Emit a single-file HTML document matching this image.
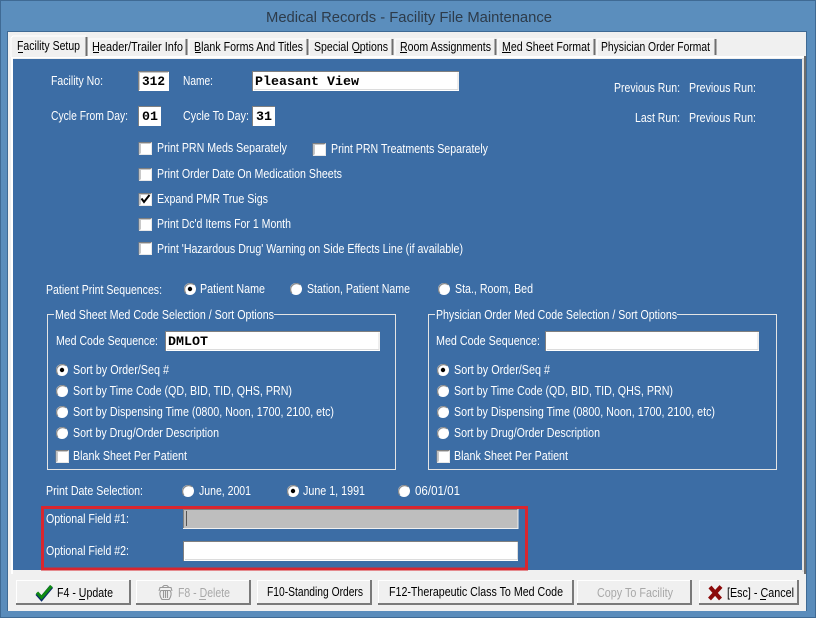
<!DOCTYPE html>
<html><head><meta charset="utf-8"><style>
html,body{margin:0;padding:0;background:#fff;width:816px;height:621px;overflow:hidden}
svg{display:block}
text{font-family:"Liberation Sans",sans-serif;font-size:13px;fill:#fff}
.k text,text.k{fill:#000}
.d text{fill:#a8a8a8}
.m{font-family:"Liberation Mono",monospace;font-weight:bold;font-size:13px;fill:#000}
</style></head><body>
<svg width="816" height="621" viewBox="0 0 816 621" xmlns="http://www.w3.org/2000/svg" shape-rendering="crispEdges">
<defs>
<linearGradient id="t" x1="0" y1="0" x2="0" y2="1"><stop offset="0" stop-color="#5b8ebd"/><stop offset="1" stop-color="#5a8cbb"/></linearGradient>
<g id="cb"><rect x="0" y="0" width="13" height="13" fill="#fff"/><path d="M0 12.500V.5H12.500" fill="none" stroke="#808080"/><path d="M1.500 11.500V1.500H11.500" fill="none" stroke="#c8c8c8"/><path d="M1 12.500H12.500V1" fill="none" stroke="#e8e8e8"/></g>
<g id="ro" shape-rendering="auto"><circle r="6" fill="#fff"/><path d="M-4.200 4.200A6 6 0 0 1 4.200-4.200" fill="none" stroke="#8a8a8a" stroke-width="1.200"/></g>
<g id="rc" shape-rendering="auto"><use href="#ro"/><circle r="2.200" fill="#000"/></g>
</defs>
<rect x="0" y="0" width="816" height="618" fill="url(#t)"/>
<rect x=".5" y=".5" width="815" height="617" fill="none" stroke="#3f6a94"/>
<text x="266" y="22" textLength="286" lengthAdjust="spacingAndGlyphs" style="font-size:15px;fill:#2d3b4a">Medical Records - Facility File Maintenance</text>
<rect x="8" y="32" width="798" height="579" fill="#f0f0f0"/>
<path d="M7.500 611V31.500H806.500V611" fill="none" stroke="#3f6a94"/>
<!-- page -->
<rect x="11" y="56" width="794" height="518" fill="#f0f0f0"/>
<rect x="11" y="56" width="793" height="2" fill="#fff"/>
<rect x="11" y="56" width="2" height="518" fill="#fff"/>
<rect x="804" y="56" width="2" height="518" fill="#6e6e6e"/>
<rect x="802" y="58" width="2" height="514" fill="#e4e4e4"/>
<rect x="13" y="59" width="789" height="511" fill="#3c6da5"/>
<!-- tabs -->
<g>
<path d="M11 57V38L13 36H86V57Z" fill="#f0f0f0"/><path d="M11 57V38L13 36H86" fill="none" stroke="#fff"/><path d="M86.500 37V56" stroke="#6e6e6e" stroke-width="2"/>
<path d="M89 56V39H185" fill="none" stroke="#fff"/><path d="M186.500 39V55" stroke="#6e6e6e" stroke-width="2"/>
<path d="M189 56V39H306" fill="none" stroke="#fff"/><path d="M307.500 39V55" stroke="#6e6e6e" stroke-width="2"/>
<path d="M309 56V39H391" fill="none" stroke="#fff"/><path d="M392.500 39V55" stroke="#6e6e6e" stroke-width="2"/>
<path d="M395 56V39H494" fill="none" stroke="#fff"/><path d="M495.500 39V55" stroke="#6e6e6e" stroke-width="2"/>
<path d="M498 56V39H593" fill="none" stroke="#fff"/><path d="M594.500 39V55" stroke="#6e6e6e" stroke-width="2"/>
<path d="M597 56V39H714" fill="none" stroke="#fff"/><path d="M715.500 39V55" stroke="#6e6e6e" stroke-width="2"/>
</g>
<g class="k">
<text x="17" y="50" textLength="63" lengthAdjust="spacingAndGlyphs">Facility Setup</text>
<text x="92" y="51" textLength="91" lengthAdjust="spacingAndGlyphs">Header/Trailer Info</text>
<text x="194" y="51" textLength="109" lengthAdjust="spacingAndGlyphs">Blank Forms And Titles</text>
<text x="314" y="51" textLength="74" lengthAdjust="spacingAndGlyphs">Special Options</text>
<text x="400" y="51" textLength="91" lengthAdjust="spacingAndGlyphs">Room Assignments</text>
<text x="502" y="51" textLength="88" lengthAdjust="spacingAndGlyphs">Med Sheet Format</text>
<text x="601" y="51" textLength="109" lengthAdjust="spacingAndGlyphs">Physician Order Format</text>
</g>
<path d="M18 52.500H23M93 52.500H99M195 52.500H201M354 52.500H361M400 52.500H407M502 52.500H511" stroke="#000"/>
<!-- top fields -->
<g>
<rect x="138" y="71" width="31" height="20" fill="#fff"/><path d="M138.500 91V71.500H169" fill="none" stroke="#808080"/><path d="M139.500 90V72.500H168" fill="none" stroke="#c8c8c8"/>
<rect x="252" y="71" width="207" height="20" fill="#fff"/><path d="M252.500 91V71.500H459" fill="none" stroke="#808080"/><path d="M458 72.500V89.500H254" fill="none" stroke="#dcdcdc"/>
<rect x="138" y="106" width="23" height="20" fill="#fff"/><path d="M138.500 126V106.500H161" fill="none" stroke="#808080"/>
<rect x="252" y="106" width="23" height="20" fill="#fff"/><path d="M252.500 126V106.500H275" fill="none" stroke="#808080"/>
</g>
<text x="142" y="85" textLength="23" class="m" lengthAdjust="spacingAndGlyphs">312</text>
<text x="255" y="85" textLength="104" class="m" lengthAdjust="spacingAndGlyphs">Pleasant View</text>
<text x="142" y="120" textLength="16" class="m" lengthAdjust="spacingAndGlyphs">01</text>
<text x="256" y="120" textLength="16" class="m" lengthAdjust="spacingAndGlyphs">31</text>
<text x="51" y="85" textLength="52" lengthAdjust="spacingAndGlyphs">Facility No:</text>
<text x="183" y="85" textLength="30" lengthAdjust="spacingAndGlyphs">Name:</text>
<text x="51" y="120" textLength="77" lengthAdjust="spacingAndGlyphs">Cycle From Day:</text>
<text x="183" y="120" textLength="66" lengthAdjust="spacingAndGlyphs">Cycle To Day:</text>
<text x="614" y="92" textLength="66" lengthAdjust="spacingAndGlyphs">Previous Run:</text>
<text x="689" y="92" textLength="67" lengthAdjust="spacingAndGlyphs">Previous Run:</text>
<text x="635" y="122" textLength="45" lengthAdjust="spacingAndGlyphs">Last Run:</text>
<text x="689" y="122" textLength="67" lengthAdjust="spacingAndGlyphs">Previous Run:</text>
<!-- checkboxes -->
<use href="#cb" x="139" y="142"/><use href="#cb" x="313" y="143"/><use href="#cb" x="139" y="168"/><use href="#cb" x="139" y="193"/><use href="#cb" x="139" y="218"/><use href="#cb" x="139" y="242"/>
<path d="M141.500 198.500L144 202L149.500 195" fill="none" stroke="#000" stroke-width="2" shape-rendering="auto"/>
<text x="157" y="152" textLength="130" lengthAdjust="spacingAndGlyphs">Print PRN Meds Separately</text>
<text x="331" y="153" textLength="157" lengthAdjust="spacingAndGlyphs">Print PRN Treatments Separately</text>
<text x="157" y="178" textLength="185" lengthAdjust="spacingAndGlyphs">Print Order Date On Medication Sheets</text>
<text x="157" y="203" textLength="111" lengthAdjust="spacingAndGlyphs">Expand PMR True Sigs</text>
<text x="157" y="228" textLength="134" lengthAdjust="spacingAndGlyphs">Print Dc'd Items For 1 Month</text>
<text x="157" y="253" textLength="306" lengthAdjust="spacingAndGlyphs">Print 'Hazardous Drug' Warning on Side Effects Line (if available)</text>
<!-- sequences -->
<text x="46" y="294" textLength="116" lengthAdjust="spacingAndGlyphs">Patient Print Sequences:</text>
<use href="#rc" x="190" y="289"/><use href="#ro" x="296" y="289"/><use href="#ro" x="444" y="289"/>
<text x="200" y="293" textLength="65" lengthAdjust="spacingAndGlyphs">Patient Name</text>
<text x="307" y="293" textLength="103" lengthAdjust="spacingAndGlyphs">Station, Patient Name</text>
<text x="455" y="293" textLength="78" lengthAdjust="spacingAndGlyphs">Sta., Room, Bed</text>
<!-- group 1 -->
<path d="M54 314.500H47.500V469.500H395.500V314.500H274" fill="none" stroke="#e4e4e4"/>
<text x="55" y="319" textLength="219" lengthAdjust="spacingAndGlyphs">Med Sheet Med Code Selection / Sort Options</text>
<text x="56" y="345" textLength="102" lengthAdjust="spacingAndGlyphs">Med Code Sequence:</text>
<rect x="165" y="331" width="215" height="20" fill="#fff"/><path d="M165.500 351V331.500H380" fill="none" stroke="#808080"/><path d="M379 332.500V349.500H167" fill="none" stroke="#dcdcdc"/>
<text x="168" y="345" textLength="40" class="m" lengthAdjust="spacingAndGlyphs">DMLOT</text>
<use href="#rc" x="62" y="370"/><use href="#ro" x="62" y="391"/><use href="#ro" x="62" y="412"/><use href="#ro" x="62" y="433"/>
<text x="73" y="374" textLength="96" lengthAdjust="spacingAndGlyphs">Sort by Order/Seq #</text>
<text x="73" y="395" textLength="219" lengthAdjust="spacingAndGlyphs">Sort by Time Code (QD, BID, TID, QHS, PRN)</text>
<text x="73" y="416" textLength="261" lengthAdjust="spacingAndGlyphs">Sort by Dispensing Time (0800, Noon, 1700, 2100, etc)</text>
<text x="73" y="437" textLength="146" lengthAdjust="spacingAndGlyphs">Sort by Drug/Order Description</text>
<use href="#cb" x="56" y="450"/>
<text x="73" y="460" textLength="114" lengthAdjust="spacingAndGlyphs">Blank Sheet Per Patient</text>
<!-- group 2 -->
<path d="M435 314.500H428.500V469.500H776.500V314.500H677" fill="none" stroke="#e4e4e4"/>
<text x="436" y="319" textLength="241" lengthAdjust="spacingAndGlyphs">Physician Order Med Code Selection / Sort Options</text>
<text x="436" y="345" textLength="104" lengthAdjust="spacingAndGlyphs">Med Code Sequence:</text>
<rect x="545" y="331" width="214" height="20" fill="#fff"/><path d="M545.500 351V331.500H759" fill="none" stroke="#808080"/><path d="M758 332.500V349.500H547" fill="none" stroke="#dcdcdc"/>
<use href="#rc" x="443" y="370"/><use href="#ro" x="443" y="391"/><use href="#ro" x="443" y="412"/><use href="#ro" x="443" y="433"/>
<text x="454" y="374" textLength="96" lengthAdjust="spacingAndGlyphs">Sort by Order/Seq #</text>
<text x="454" y="395" textLength="219" lengthAdjust="spacingAndGlyphs">Sort by Time Code (QD, BID, TID, QHS, PRN)</text>
<text x="454" y="416" textLength="261" lengthAdjust="spacingAndGlyphs">Sort by Dispensing Time (0800, Noon, 1700, 2100, etc)</text>
<text x="454" y="437" textLength="146" lengthAdjust="spacingAndGlyphs">Sort by Drug/Order Description</text>
<use href="#cb" x="437" y="450"/>
<text x="454" y="460" textLength="114" lengthAdjust="spacingAndGlyphs">Blank Sheet Per Patient</text>
<!-- date -->
<text x="46" y="495" textLength="97" lengthAdjust="spacingAndGlyphs">Print Date Selection:</text>
<use href="#ro" x="188" y="491"/><use href="#rc" x="293" y="491"/><use href="#ro" x="404" y="491"/>
<text x="199" y="495" textLength="52" lengthAdjust="spacingAndGlyphs">June, 2001</text>
<text x="303" y="495" textLength="62" lengthAdjust="spacingAndGlyphs">June 1, 1991</text>
<text x="415" y="495" textLength="45" lengthAdjust="spacingAndGlyphs">06/01/01</text>
<!-- optional -->
<text x="46" y="523" textLength="83" lengthAdjust="spacingAndGlyphs">Optional Field #1:</text>
<text x="46" y="555" textLength="83" lengthAdjust="spacingAndGlyphs">Optional Field #2:</text>
<rect x="183" y="509" width="335" height="20" fill="#bebebe"/><path d="M183.500 529V509.500H518" fill="none" stroke="#808080"/><path d="M518 509V528.500H183" fill="none" stroke="#f0f0f0"/><path d="M186.500 511V526" stroke="#555"/>
<rect x="183" y="541" width="335" height="20" fill="#fff"/><path d="M183.500 561V541.500H518" fill="none" stroke="#808080"/><path d="M517.500 542V559.500H185" fill="none" stroke="#dcdcdc"/>
<rect x="42.500" y="507.500" width="484" height="61.500" fill="none" stroke="#d9262e" stroke-width="3"/>
<!-- buttons -->
<g fill="#f0f0f0">
<rect x="16" y="580" width="115" height="25"/><rect x="136" y="580" width="115" height="25"/><rect x="257" y="580" width="115" height="25"/><rect x="378" y="580" width="196" height="25"/><rect x="577" y="580" width="115" height="25"/><rect x="699" y="580" width="100" height="25"/>
</g>
<g fill="none" stroke="#fff">
<path d="M16.500 604V580.500H130M136.500 604V580.500H250M257.500 604V580.500H371M378.500 604V580.500H573M577.500 604V580.500H691M699.500 604V580.500H798"/>
</g>
<g fill="none" stroke="#7a7a7a" stroke-width="2">
<path d="M130 580V604H16M250 580V604H136M371 580V604H257M573 580V604H378M691 580V604H577M798 580V604H699"/>
</g>
<g class="k">
<text x="57" y="597" textLength="56" lengthAdjust="spacingAndGlyphs">F4 - Update</text>
<text x="267" y="596" textLength="96" lengthAdjust="spacingAndGlyphs">F10-Standing Orders</text>
<text x="389" y="596" textLength="174" lengthAdjust="spacingAndGlyphs">F12-Therapeutic Class To Med Code</text>
<text x="727" y="597" textLength="67" lengthAdjust="spacingAndGlyphs">[Esc] - Cancel</text>
</g>
<g class="d">
<text x="178" y="597" textLength="52" lengthAdjust="spacingAndGlyphs">F8 - Delete</text>
<text x="597" y="597" textLength="76" lengthAdjust="spacingAndGlyphs">Copy To Facility</text>
</g>
<path d="M79 599.500H85M760 599.500H766" stroke="#000"/>
<path d="M199 599.500H206" stroke="#a8a8a8"/>
<!-- icons -->
<g shape-rendering="auto">
<path d="M37 593.500L41.500 598.500L51.500 586.500" fill="none" stroke="#0a2a6a" stroke-width="4.200"/>
<path d="M37 592.500L41.500 597.500L51.500 586" fill="none" stroke="#0f8a12" stroke-width="3"/>
<path d="M161 590.500C159 593 160 597 162 599.500H169C171 597 172 593 170 590.500Z" fill="none" stroke="#999" stroke-width="1.100"/>
<path d="M159 591L160 587.500H171L172 591M162 587.500L164 585.500H167L169 587.500M163.500 591V598M165.500 591V598M167.500 591V598" fill="none" stroke="#999" stroke-width="1.100"/>
<path d="M710 587L720.500 599M721 586.500L709.500 599" stroke="#8c0a0a" stroke-width="4" fill="none"/>
</g>
</svg>
</body></html>
